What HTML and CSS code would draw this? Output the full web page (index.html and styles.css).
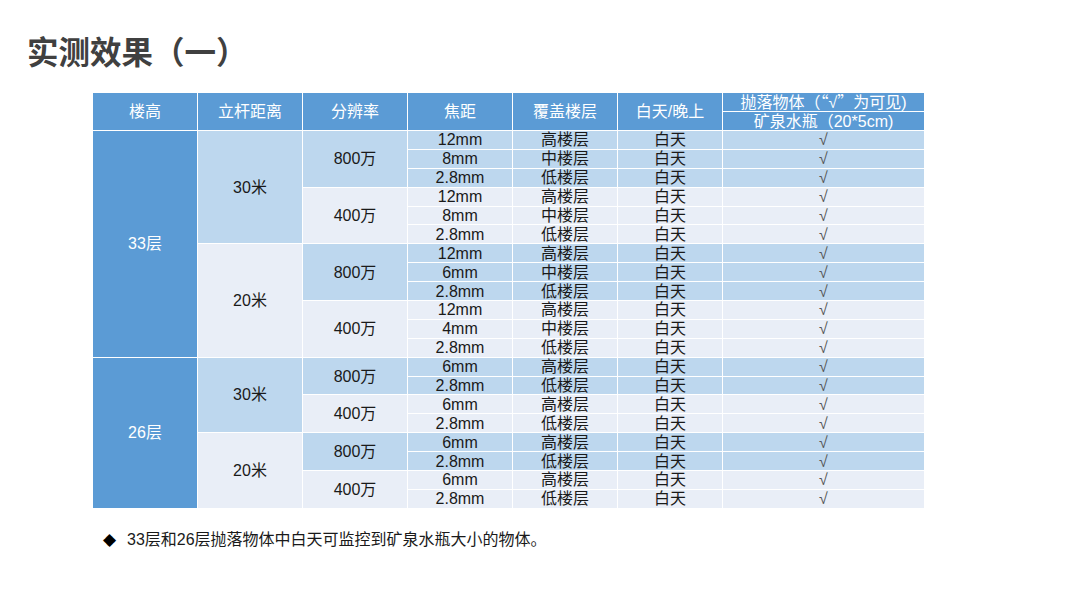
FILE: index.html
```html
<!DOCTYPE html>
<html lang="zh-CN">
<head>
<meta charset="utf-8">
<title>实测效果（一）</title>
<link rel="stylesheet" href="styles.css">
</head>
<body>
<div class="page">
  <h1 class="title">实测效果（一）</h1>
  <table class="grid">
    <colgroup>
      <col class="c-std"><col class="c-std"><col class="c-std"><col class="c-std"><col class="c-std"><col class="c-std"><col class="c-wide">
    </colgroup>
    <thead>
      <tr class="hrow">
        <th rowspan="2">楼高</th>
        <th rowspan="2">立杆距离</th>
        <th rowspan="2">分辨率</th>
        <th rowspan="2">焦距</th>
        <th rowspan="2">覆盖楼层</th>
        <th rowspan="2">白天/晚上</th>
        <th class="sub">抛落物体（<span class="cjk">“</span>√<span class="cjk">”</span>为可见)</th>
      </tr>
      <tr class="hrow">
        <th class="sub">矿泉水瓶（20*5cm)</th>
      </tr>
    </thead>
    <tbody>
      <tr class="d"><td rowspan="12" class="floor">33层</td><td rowspan="6" class="dk">30米</td><td rowspan="3" class="dk">800万</td><td>12mm</td><td>高楼层</td><td>白天</td><td class="ck">√</td></tr>
      <tr class="d"><td>8mm</td><td>中楼层</td><td>白天</td><td class="ck">√</td></tr>
      <tr class="d"><td>2.8mm</td><td>低楼层</td><td>白天</td><td class="ck">√</td></tr>
      <tr class="l"><td rowspan="3" class="lt">400万</td><td>12mm</td><td>高楼层</td><td>白天</td><td class="ck">√</td></tr>
      <tr class="l"><td>8mm</td><td>中楼层</td><td>白天</td><td class="ck">√</td></tr>
      <tr class="l"><td>2.8mm</td><td>低楼层</td><td>白天</td><td class="ck">√</td></tr>
      <tr class="d"><td rowspan="6" class="lt">20米</td><td rowspan="3" class="dk">800万</td><td>12mm</td><td>高楼层</td><td>白天</td><td class="ck">√</td></tr>
      <tr class="d"><td>6mm</td><td>中楼层</td><td>白天</td><td class="ck">√</td></tr>
      <tr class="d"><td>2.8mm</td><td>低楼层</td><td>白天</td><td class="ck">√</td></tr>
      <tr class="l"><td rowspan="3" class="lt">400万</td><td>12mm</td><td>高楼层</td><td>白天</td><td class="ck">√</td></tr>
      <tr class="l"><td>4mm</td><td>中楼层</td><td>白天</td><td class="ck">√</td></tr>
      <tr class="l"><td>2.8mm</td><td>低楼层</td><td>白天</td><td class="ck">√</td></tr>
      <tr class="d"><td rowspan="8" class="floor">26层</td><td rowspan="4" class="dk">30米</td><td rowspan="2" class="dk">800万</td><td>6mm</td><td>高楼层</td><td>白天</td><td class="ck">√</td></tr>
      <tr class="d"><td>2.8mm</td><td>低楼层</td><td>白天</td><td class="ck">√</td></tr>
      <tr class="l"><td rowspan="2" class="lt">400万</td><td>6mm</td><td>高楼层</td><td>白天</td><td class="ck">√</td></tr>
      <tr class="l"><td>2.8mm</td><td>低楼层</td><td>白天</td><td class="ck">√</td></tr>
      <tr class="d"><td rowspan="4" class="lt">20米</td><td rowspan="2" class="dk">800万</td><td>6mm</td><td>高楼层</td><td>白天</td><td class="ck">√</td></tr>
      <tr class="d"><td>2.8mm</td><td>低楼层</td><td>白天</td><td class="ck">√</td></tr>
      <tr class="l"><td rowspan="2" class="lt">400万</td><td>6mm</td><td>高楼层</td><td>白天</td><td class="ck">√</td></tr>
      <tr class="l"><td>2.8mm</td><td>低楼层</td><td>白天</td><td class="ck">√</td></tr>
    </tbody>
  </table>
  <p class="note"><span class="bullet">◆</span>33层和26层抛落物体中白天可监控到矿泉水瓶大小的物体。</p>
</div>
</body>
</html>
```

FILE: styles.css
```css
* { box-sizing: border-box; }

body {
  margin: 0;
  background: #ffffff;
  font-family: "Liberation Sans", "Noto Sans CJK SC", sans-serif;
}

.page {
  width: 1080px;
  height: 608px;
  overflow: hidden;
}

.title {
  margin: 0;
  padding: 33px 0 0 27px;
  font-size: 31.5px;
  line-height: 40px;
  font-weight: bold;
  color: #404040;
  font-family: "Liberation Sans", "Noto Sans CJK SC", sans-serif;
}

.grid {
  margin: 19px 0 0 92px;
  border-collapse: collapse;
  table-layout: fixed;
  width: 832px;
  font-size: 16px;
  color: #1a1a1a;
  border: 1px solid #ffffff;
}

.c-std { width: 105px; }
.c-wide { width: 202px; }

.grid th,
.grid td {
  border: 1px solid #ffffff;
  padding: 0;
  text-align: center;
  vertical-align: middle;
  white-space: nowrap;
  line-height: 17px;
}

.grid th {
  background: #5b9bd5;
  color: #ffffff;
  font-weight: normal;
}

.hrow { height: 19px; }
.grid th.sub { line-height: 17px; height: 19px; }

.cjk {
  font-family: "Noto Sans CJK SC", sans-serif;
  line-height: 1;
}

.grid tbody tr { height: 18.9px; }
.grid tbody td { height: 18.9px; }

.d td { background: #bdd7ee; }
.l td { background: #e9eef7; }

.grid td.floor { background: #5b9bd5; color: #ffffff; }
.grid td.dk { background: #bdd7ee; }
.grid td.lt { background: #e9eef7; }

.ck { color: #555555; }

.note {
  margin: 20px 0 0 103px;
  font-size: 16px;
  line-height: 20px;
  color: #1a1a1a;
}

.bullet {
  display: inline-block;
  width: 24px;
  font-size: 17px;
  color: #000000;
  font-family: "DejaVu Sans", sans-serif;
}
```
